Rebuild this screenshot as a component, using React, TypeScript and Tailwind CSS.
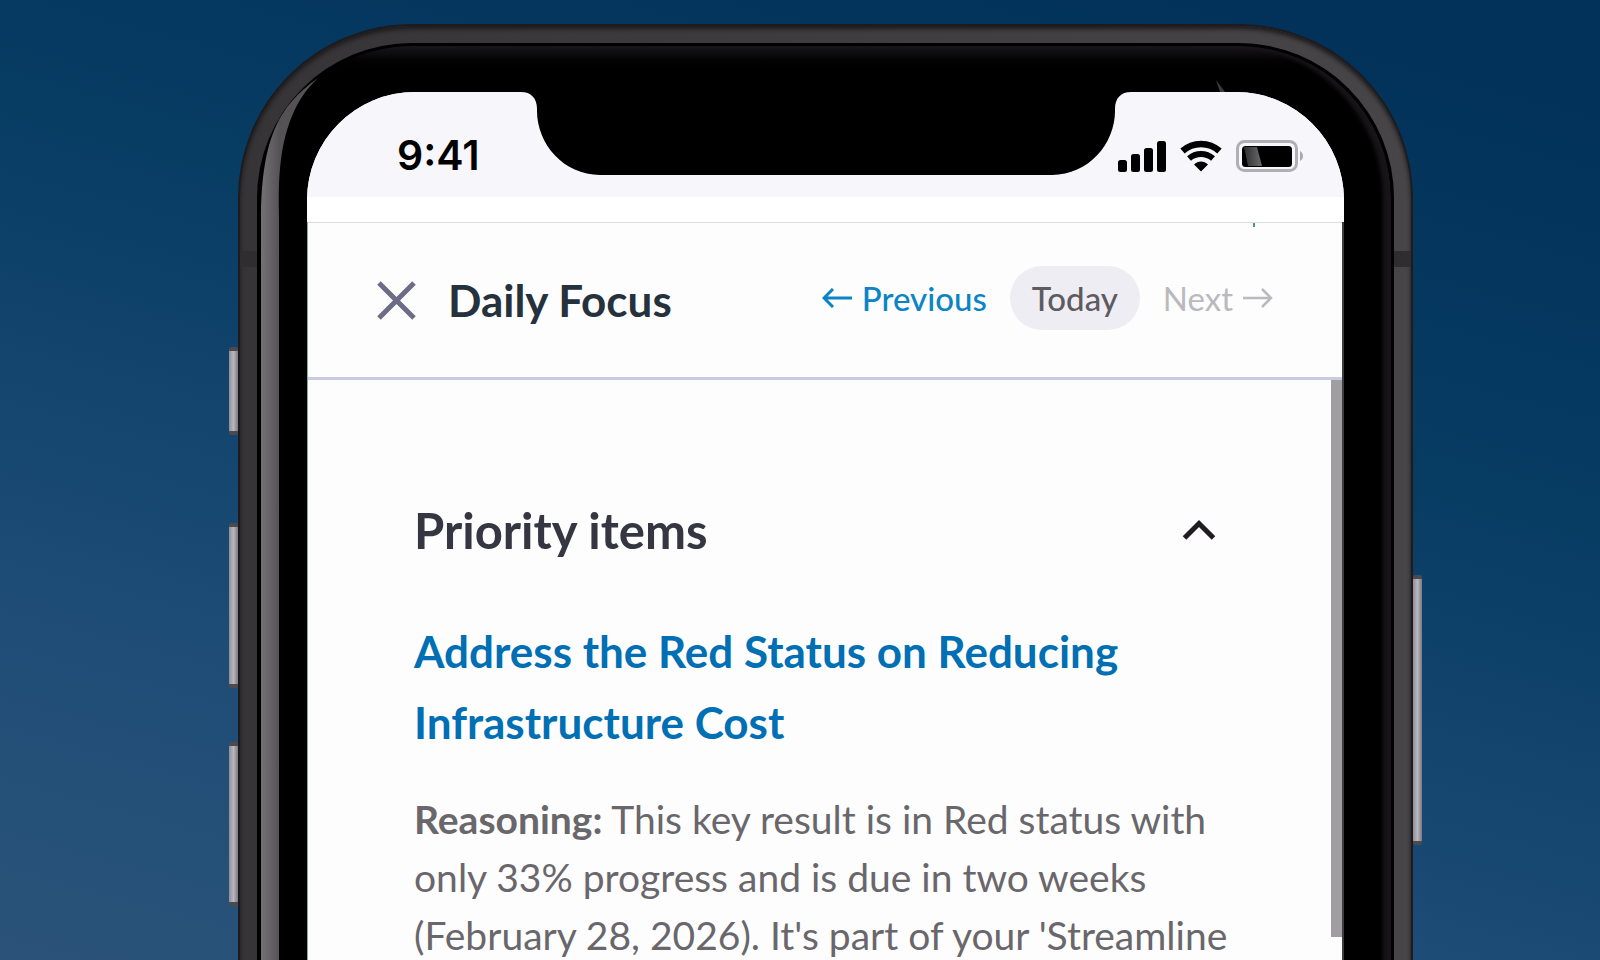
const sideButtons = [
  { name: "silent", className: "-left-[11px] top-[321px] h-[88px]" },
  { name: "volume-up", className: "-left-[11px] top-[497px] h-[165px]" },
  { name: "volume-down", className: "-left-[11px] top-[716px] h-[164px]" },
  { name: "power", className: "-right-[11px] top-[549px] h-[270px]" },
];

function Notch() {
  return (
    <svg
      viewBox="0 0 610 84"
      className="absolute -top-px left-1/2 h-[84px] w-[610px] -translate-x-1/2"
      aria-hidden="true"
    >
      <path
        d="M0 0H610V1C600 1 594 7 594 18C595 52 568 84 531 84H79C42 84 15 52 16 18C16 7 10 1 0 1Z"
        fill="#000"
      />
    </svg>
  );
}

function StatusIcons() {
  return (
    <div className="flex items-center gap-3.5" aria-hidden="true">
      <svg width="48" height="32" viewBox="0 0 48 32" fill="#000">
        <rect x="0" y="20" width="9" height="12" rx="2.5" />
        <rect x="13" y="14" width="9" height="18" rx="2.5" />
        <rect x="26" y="8" width="9" height="24" rx="2.5" />
        <rect x="39" y="1" width="9" height="31" rx="2.5" />
      </svg>
      <svg width="42" height="32" viewBox="0 0 42 32" fill="none">
        <path d="M2.500 11C13 1.500 29 1.500 39.500 11" stroke="#000" strokeWidth="6.500" />
        <path d="M9 18.500C16 12.500 26 12.500 33 18.500" stroke="#000" strokeWidth="6" />
        <path d="M21 31.500L14 24.500C18 20.500 24 20.500 28 24.500Z" fill="#000" />
      </svg>
      <svg width="68" height="32" viewBox="0 0 68 32" fill="none">
        <defs>
          <linearGradient id="glare" x1="7" x2="26" y1="0" y2="0" gradientUnits="userSpaceOnUse">
            <stop stopColor="#2a292b" />
            <stop offset="1" stopColor="#6b6a6c" />
          </linearGradient>
        </defs>
        <rect x="1.500" y="1.500" width="59" height="29" rx="7" stroke="#b0afb2" strokeWidth="3" />
        <rect x="6" y="6" width="50" height="21" rx="3.500" fill="#000" />
        <path d="M8 7H21L26 26H12Z" fill="url(#glare)" />
        <path d="M64 11C68 13 68 19 64 21Z" fill="#aaa9ac" />
      </svg>
    </div>
  );
}

function StatusBar() {
  return (
    <div className="relative flex h-[105px] items-center justify-between bg-[#f7f6fa] pr-10 pl-[90px] pt-[22px]">
      <span className="font-['Inter',sans-serif] text-[41px] leading-none font-semibold text-black">
        9:41
      </span>
      <Notch />
      <StatusIcons />
    </div>
  );
}

function FocusHeader() {
  return (
    <header className="relative flex h-[158px] items-center justify-between border-t border-b-[3px] border-t-[#dddce0] border-b-[#c9cae6] pr-[69px] pl-[69px]">
      <span className="absolute top-0 right-[87px] h-1 w-0.5 bg-[#3f9c6e]" />
      <div className="flex items-center gap-8">
        <button type="button" aria-label="Close">
          <svg width="39" height="39" viewBox="0 0 39 39" fill="none">
            <path d="M2 2L37 37M37 2L2 37" stroke="#6d6b85" strokeWidth="5" />
          </svg>
        </button>
        <h1 className="text-[44px] leading-none font-bold text-[#25313c]">
          Daily Focus
        </h1>
      </div>
      <nav className="flex items-center gap-[23px] pb-1 text-[33px] leading-none">
        <button type="button" className="flex items-center gap-2.5 font-medium text-[#0a84c6]">
          <svg width="30" height="20" viewBox="0 0 30 20" fill="none" stroke="currentColor" strokeWidth="3">
            <path d="M30 10H2M11 1L2 10L11 19" />
          </svg>
          Previous
        </button>
        <button
          type="button"
          className="h-16 rounded-full bg-[#efedf4] px-[22px] font-medium text-[#5d5b60]"
        >
          Today
        </button>
        <button type="button" disabled className="flex items-center gap-2.5 text-[#bab9bd]">
          Next
          <svg width="30" height="20" viewBox="0 0 30 20" fill="none" stroke="currentColor" strokeWidth="2.500">
            <path d="M0 10H28M19 1L28 10L19 19" />
          </svg>
        </button>
      </nav>
    </header>
  );
}

function PriorityItems() {
  return (
    <section className="pt-[120px] pr-[106px] pl-[106px]">
      <div className="flex items-center justify-between pr-5">
        <h2 className="text-[49px] leading-[60px] font-bold text-[#363642]">
          Priority items
        </h2>
        <button type="button" aria-label="Collapse priority items">
          <svg width="34" height="22" viewBox="0 0 34 22" fill="none">
            <path d="M2.500 19L17 4.500L31.500 19" stroke="#1f1d22" strokeWidth="5" />
          </svg>
        </button>
      </div>
      <a
        href="#reducing-infrastructure-cost"
        className="mt-[56px] block text-[44px] leading-[71px] font-bold text-[#006fb4]"
      >
        Address the Red Status on Reducing Infrastructure Cost
      </a>
      <p className="mt-[32px] text-[39px] leading-[58px] text-[#69676b]">
        <strong className="font-bold">Reasoning:</strong> This key result is in
        Red status with only 33% progress and is due in two weeks (February 28,
        2026). It's part of your 'Streamline
      </p>
    </section>
  );
}

export default function App() {
  return (
    <main className="flex h-screen justify-center overflow-hidden bg-[linear-gradient(195deg,#02325a_8%,#073c63_38%,#1d4c76_72%,#2b5379)] pt-6 pl-[51px] font-['Lato',sans-serif]">
      <div className="relative h-[1200px] w-full max-w-[1175px] rounded-t-[174px] border-2 border-b-0 border-[#1d1b1d] bg-linear-to-r from-[#363436] to-[#474547] p-[17px] pb-0 shadow-[inset_0_3px_4px_#1d1b1d]">
        {sideButtons.map((button) => (
          <span
            key={button.name}
            className={`absolute w-[9px] rounded-xs border-y-4 border-[#4b4a4e] bg-linear-to-r from-[#8f8d97] via-[#bab8be] to-[#7c7a80] ${button.className}`}
          />
        ))}
        <div className="absolute inset-x-0 top-[225px] h-4 bg-[#2f2d2f]" />
        <div className="relative flex h-full flex-col rounded-t-[155px] border-[3px] border-b-0 border-black bg-linear-to-b from-[#1a181c] to-black to-[28px] px-[47px] pt-[46px] shadow-[inset_-8px_0_4px_#171518]">
          <svg
            className="absolute top-[28px] left-0 h-[1000px] w-[64px]"
            viewBox="0 0 64 1000"
            fill="none"
            aria-hidden="true"
          >
            <defs>
              <linearGradient id="shine" x1="0" x2="20" y1="0" y2="0" gradientUnits="userSpaceOnUse">
                <stop stopColor="#757375" />
                <stop offset="1" stopColor="#545254" />
              </linearGradient>
            </defs>
            <path
              d="M58 4C38 18 24 34 16 52C6 74 1 104 1 145V1000H19V145C18 100 20 60 40 26C46 16 52 10 58 4Z"
              fill="url(#shine)"
            />
          </svg>
          <svg
            className="absolute top-[34px] right-[164px] h-3 w-3"
            viewBox="0 0 12 12"
            aria-hidden="true"
          >
            <path d="M1 0L10 12H5Z" fill="#3b3a3c" />
          </svg>
          <div className="relative flex-1 overflow-hidden rounded-t-[108px] bg-[#fdfdfe]">
            <StatusBar />
            <div className="h-[25px] bg-white" />
            <div className="border-r-2 border-l border-r-[#3f3d40] border-l-[#7fae9b]">
              <FocusHeader />
              <div className="relative">
                <PriorityItems />
                <div className="absolute top-0 right-0 h-[557px] w-[11px] bg-[#a09ea1]" />
              </div>
            </div>
          </div>
        </div>
      </div>
    </main>
  );
}
